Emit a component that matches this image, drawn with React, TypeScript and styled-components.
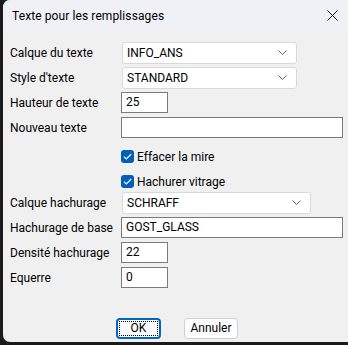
import React, { useState } from "react";
import styled, { createGlobalStyle } from "styled-components";

/* ---------- global ---------- */
const Global = createGlobalStyle`
  html, body { margin: 0; padding: 0; }
  body {
    background: #1b1b1b;
    width: 348px;
    height: 345px;
    overflow: hidden;
    font-family: "Segoe UI", Roboto, "Noto Sans", sans-serif;
    font-size: 12px;
    color: #000;
  }
`;

/* ---------- window chrome ---------- */
const Window = styled.div`
  margin-left: 3px;
  width: 360px;
  height: 342px;
  background: #f0f0f0;
  border-radius: 7px 0 0 7px;
  overflow: hidden;
  display: flex;
  flex-direction: column;
`;

const TitleBar = styled.div`
  height: 31px;
  flex: none;
  background: #eff1f6;
  display: flex;
  align-items: center;
  padding-left: 9px;
  padding-right: 12px;
  width: 348px;
  box-sizing: border-box;
`;

const Title = styled.span`
  flex: 1;
  font-size: 12px;
  letter-spacing: 0.1px;
`;

const CloseBtn = styled.div`
  width: 14px;
  height: 14px;
  display: flex;
  align-items: center;
  justify-content: center;
`;

/* ---------- form ---------- */
const Form = styled.div`
  display: flex;
  flex-direction: column;
  padding: 9px 0 0 7px;
  width: 341px;
`;

const Row = styled.div<{ $gap?: number; $h?: number }>`
  height: ${({ $h }) => $h ?? 25}px;
  display: grid;
  grid-template-columns: 111px 1fr;
  align-items: center;
  margin-top: ${({ $gap }) => $gap ?? 0}px;
`;

const Label = styled.span`
  font-size: 12px;
  white-space: nowrap;
`;

const Combo = styled.div<{ $w: number }>`
  width: ${({ $w }) => $w}px;
  height: 22px;
  box-sizing: border-box;
  margin-left: 1px;
  background: #fff;
  border: 1px solid #d9d9d9;
  border-radius: 3px;
  display: flex;
  align-items: center;
  padding: 0 9px 0 4px;
  justify-content: space-between;
`;

const Field = styled.div<{ $w: number }>`
  width: ${({ $w }) => $w}px;
  height: 21px;
  box-sizing: border-box;
  background: #fff;
  border: 1px solid #7a7a7a;
  display: flex;
  align-items: center;
  padding: 0 4px 2px;
`;

const CheckLabel = styled.label`
  grid-column: 2;
  display: flex;
  align-items: center;
  gap: 3px;
  cursor: default;
`;

const CheckBox = styled.span<{ $on: boolean }>`
  width: 13px;
  height: 13px;
  border-radius: 3px;
  background: ${({ $on }) => ($on ? "#005fb8" : "#fff")};
  border: ${({ $on }) => ($on ? "none" : "1px solid #555")};
  display: flex;
  align-items: center;
  justify-content: center;
`;

/* ---------- buttons ---------- */
const Footer = styled.div`
  width: 348px;
  display: flex;
  justify-content: center;
  gap: 23px;
  margin-top: 28px;
  box-sizing: border-box;
`;

const Button = styled.button<{ $primary?: boolean }>`
  height: 21px;
  width: ${({ $primary }) => ($primary ? 45 : 54)}px;
  box-sizing: border-box;
  font-family: inherit;
  font-size: 12px;
  color: #000;
  background: #fdfdfd;
  border: ${({ $primary }) => ($primary ? "2px solid #0067c0" : "1px solid #d0d0d0")};
  border-radius: 4px;
  padding: ${({ $primary }) => ($primary ? "1px" : "0 0 1px")};
  display: flex;
  align-items: stretch;
  justify-content: center;
`;

const Focus = styled.span`
  flex: 1;
  border: 1px dotted #000;
  display: flex;
  align-items: center;
  justify-content: center;
  padding-bottom: 1px;
`;

const BtnText = styled.span`
  display: flex;
  align-items: center;
`;

/* ---------- icons ---------- */
const Chevron = () => (
  <svg width="9" height="5" viewBox="0 0 9 5">
    <path d="M0.5 0.5 L4.5 4.5 L8.5 0.5" fill="none" stroke="#606060" strokeWidth="1" />
  </svg>
);

const Tick = () => (
  <svg width="9" height="7" viewBox="0 0 9 7">
    <path d="M0.8 3.6 L3.3 6 L8.2 1" fill="none" stroke="#fff" strokeWidth="1.1" />
  </svg>
);

const XIcon = () => (
  <svg width="11" height="11" viewBox="0 0 11 11">
    <path d="M0.5 0.5 L10.5 10.5 M10.5 0.5 L0.5 10.5" stroke="#1a1a1a" strokeWidth="1" />
  </svg>
);

/* ---------- component ---------- */
export default function App() {
  const [efface, setEfface] = useState(true);
  const [vitrage, setVitrage] = useState(true);

  return (
    <>
      <Global />
      <Window>
        <TitleBar>
          <Title>Texte pour les remplissages</Title>
          <CloseBtn>
            <XIcon />
          </CloseBtn>
        </TitleBar>

        <Form>
          <Row>
            <Label>Calque du texte</Label>
            <Combo $w={175}>
              INFO_ANS
              <Chevron />
            </Combo>
          </Row>
          <Row>
            <Label>Style d'texte</Label>
            <Combo $w={175}>
              STANDARD
              <Chevron />
            </Combo>
          </Row>
          <Row>
            <Label>Hauteur de texte</Label>
            <Field $w={47}>25</Field>
          </Row>
          <Row>
            <Label>Nouveau texte</Label>
            <Field $w={222}></Field>
          </Row>

          <Row $gap={8} $h={17}>
            <CheckLabel onClick={() => setEfface(!efface)}>
              <CheckBox $on={efface}>{efface && <Tick />}</CheckBox>
              Effacer la mire
            </CheckLabel>
          </Row>
          <Row $gap={8} $h={17}>
            <CheckLabel onClick={() => setVitrage(!vitrage)}>
              <CheckBox $on={vitrage}>{vitrage && <Tick />}</CheckBox>
              Hachurer vitrage
            </CheckLabel>
          </Row>

          <Row>
            <Label>Calque hachurage</Label>
            <Combo $w={189}>
              SCHRAFF
              <Chevron />
            </Combo>
          </Row>
          <Row>
            <Label>Hachurage de base</Label>
            <Field $w={222}>GOST_GLASS</Field>
          </Row>
          <Row>
            <Label>Densité hachurage</Label>
            <Field $w={47}>22</Field>
          </Row>
          <Row>
            <Label>Equerre</Label>
            <Field $w={47}>0</Field>
          </Row>
        </Form>

        <Footer>
          <Button $primary>
            <Focus>OK</Focus>
          </Button>
          <Button>
            <BtnText>Annuler</BtnText>
          </Button>
        </Footer>
      </Window>
    </>
  );
}
